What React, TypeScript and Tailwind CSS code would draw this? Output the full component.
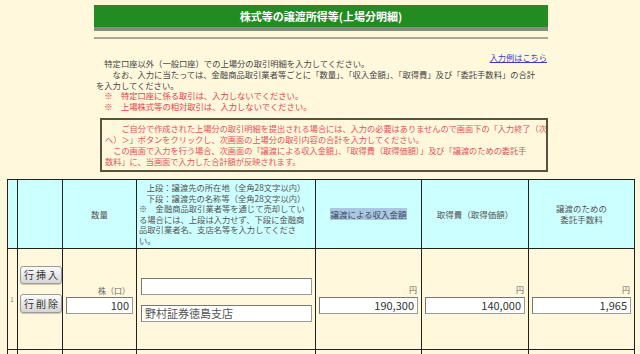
import React from 'react';

const th = 'border border-[#222] bg-[#ccffff] align-middle text-center font-normal';
const td = 'border border-[#222] align-top';
const input =
  'block w-full h-[17px] bg-white border border-[#9a9a9a] border-t-[#777] border-l-[#777] px-[3px] text-[11px] leading-[15px] text-[#333] outline-none';
const btn =
  'block w-[42px] rounded-[3px] border border-[#9a9a9a] bg-gradient-to-b from-[#fbfbfb] to-[#d6d6d6] text-[10px] whitespace-nowrap tracking-[2px] pl-[2px] text-[#333] shadow-[0_1px_1px_rgba(0,0,0,0.2)]';

const YenCell: React.FC<{ value: string }> = ({ value }) => (
  <td className={`${td} px-[3px] pt-[36px]`}>
    <div className="text-right text-[8px] leading-[10px] text-[#666] pr-[1px]">円</div>
    <input className={`${input} mt-[2px] text-right`} defaultValue={value} readOnly />
  </td>
);

export default function App() {
  return (
    <div className="w-[640px] h-[354px] overflow-hidden bg-[#fff8dc] font-['Noto_Sans_CJK_JP',sans-serif] text-[#444]">
      <div className="ml-[94px] w-[454px] pt-[5px]">
        <div className="h-[22px] bg-[#228b22] flex items-center justify-center text-white font-bold text-[11px]">
          株式等の譲渡所得等(上場分明細)
        </div>
        <div className="h-[4px] bg-[#8d8a7c]" />
        <div className="mt-[6px] h-[2px] bg-[#aaa698]" />
        <div className="mt-[13px] text-right text-[8.2px] leading-[10px] pr-[1px]">
          <a className="text-[#3b3bd0] underline">入力例はこちら</a>
        </div>
        <div className="mt-[-4px] pl-[2px] text-[8.3px] leading-[10.8px] whitespace-nowrap">
          <div>　特定口座以外（一般口座）での上場分の取引明細を入力してください。</div>
          <div>　　なお、入力に当たっては、金融商品取引業者等ごとに「数量」、「収入金額」、「取得費」及び「委託手数料」の合計</div>
          <div>を入力してください。</div>
          <div className="text-[#e8404a]">　※　特定口座に係る取引は、入力しないでください。</div>
          <div className="text-[#e8404a]">　※　上場株式等の相対取引は、入力しないでください。</div>
        </div>
        <div className="mt-[6px] ml-[6px] w-[448px] border-2 border-[#56543f] pt-[3.5px] pb-[2.5px] pl-[3px] text-[8.2px] leading-[11px] text-[#e8505a] whitespace-nowrap overflow-hidden">
          <div>　　ご自分で作成された上場分の取引明細を提出される場合には、入力の必要はありませんので画面下の「入力終了（次</div>
          <div>へ）＞」ボタンをクリックし、次画面の上場分の取引内容の合計を入力してください。</div>
          <div>　この画面で入力を行う場合、次画面の「譲渡による収入金額」、「取得費（取得価額）」及び「譲渡のための委託手</div>
          <div>数料」に、当画面で入力した合計額が反映されます。</div>
        </div>
      </div>

      <table className="table-fixed border-collapse w-[627px] ml-[7px] mt-[7px] text-[8.5px] text-[#555]">
        <colgroup>
          <col className="w-[10px]" />
          <col className="w-[45px]" />
          <col className="w-[74px]" />
          <col className="w-[179px]" />
          <col className="w-[106px]" />
          <col className="w-[107px]" />
          <col className="w-[106px]" />
        </colgroup>
        <thead>
          <tr className="h-[69px]">
            <th className={th} />
            <th className={th} />
            <th className={th}>数量</th>
            <th className={`${th} px-[2px] text-[8.3px] leading-[10.5px]`}>
              <div>上段：譲渡先の所在地（全角28文字以内）</div>
              <div>下段：譲渡先の名称等（全角28文字以内）</div>
              <div className="text-left whitespace-nowrap">
                <div>※　金融商品取引業者等を通じて売却してい</div>
                <div>る場合には、上段は入力せず、下段に金融商</div>
                <div>品取引業者名、支店名等を入力してくださ</div>
                <div>い。</div>
              </div>
            </th>
            <th className={th}>
              <span className="bg-[#aac6e2] text-[#3a4a5a]">譲渡による収入金額</span>
            </th>
            <th className={th}>取得費（取得価額）</th>
            <th className={`${th} leading-[11px]`}>
              <div>譲渡のための</div>
              <div>委託手数料</div>
            </th>
          </tr>
        </thead>
        <tbody>
          <tr className="h-[101px]">
            <td className={`${td} pt-[45px] text-[7px] text-[#888] pl-[2px]`}>1</td>
            <td className={`${td} pt-[17px] pl-[2px]`}>
              <button className={`${btn} h-[18px] leading-[16px]`}>行挿入</button>
              <button className={`${btn} mt-[10px] h-[19px] leading-[17px]`}>行削除</button>
            </td>
            <td className={`${td} px-[3px] pt-[37px]`}>
              <div className="text-right text-[8px] leading-[10px] text-[#666] pr-[3px]">株（口）</div>
              <input className={`${input} mt-[1px] text-right`} defaultValue="100" readOnly />
            </td>
            <td className={`${td} pl-[4px] pr-[3px] pt-[29px]`}>
              <input className={input} defaultValue="" readOnly />
              <input className={`${input} mt-[10px] text-[10px] text-[#555]`} defaultValue="野村証券徳島支店" readOnly />
            </td>
            <YenCell value="190,300" />
            <YenCell value="140,000" />
            <YenCell value="1,965" />
          </tr>
          <tr className="h-[20px]">
            <td className={td} />
            <td className={td} />
            <td className={td} />
            <td className={td} />
            <td className={td} />
            <td className={td} />
            <td className={td} />
          </tr>
        </tbody>
      </table>
    </div>
  );
}
